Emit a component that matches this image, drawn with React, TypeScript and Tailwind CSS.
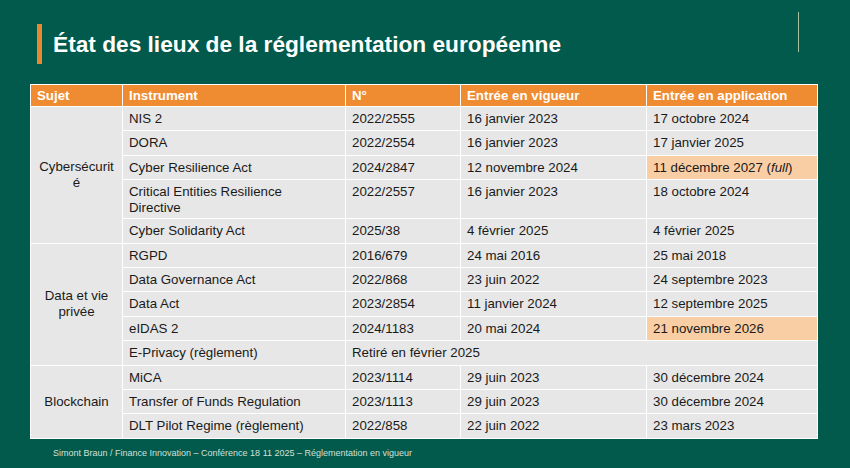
import React from 'react';

type Row = {
  instrument: string;
  number: string;
  inForce?: string;
  applies?: React.ReactNode;
  highlight?: boolean;
  tall?: boolean;
  spanNote?: string;
};

type Group = { subject: string; rows: Row[] };

const groups: Group[] = [
  {
    subject: 'Cybersécurité',
    rows: [
      { instrument: 'NIS 2', number: '2022/2555', inForce: '16 janvier 2023', applies: '17 octobre 2024' },
      { instrument: 'DORA', number: '2022/2554', inForce: '16 janvier 2023', applies: '17 janvier 2025' },
      {
        instrument: 'Cyber Resilience Act',
        number: '2024/2847',
        inForce: '12 novembre 2024',
        applies: (
          <>
            11 décembre 2027 (<i>full</i>)
          </>
        ),
        highlight: true,
      },
      {
        instrument: 'Critical Entities Resilience Directive',
        number: '2022/2557',
        inForce: '16 janvier 2023',
        applies: '18 octobre 2024',
        tall: true,
      },
      { instrument: 'Cyber Solidarity Act', number: '2025/38', inForce: '4 février 2025', applies: '4 février 2025' },
    ],
  },
  {
    subject: 'Data et vie privée',
    rows: [
      { instrument: 'RGPD', number: '2016/679', inForce: '24 mai 2016', applies: '25 mai 2018' },
      { instrument: 'Data Governance Act', number: '2022/868', inForce: '23 juin 2022', applies: '24 septembre 2023' },
      { instrument: 'Data Act', number: '2023/2854', inForce: '11 janvier 2024', applies: '12 septembre 2025' },
      { instrument: 'eIDAS 2', number: '2024/1183', inForce: '20 mai 2024', applies: '21 novembre 2026', highlight: true },
      { instrument: 'E-Privacy (règlement)', number: '', spanNote: 'Retiré en février 2025' },
    ],
  },
  {
    subject: 'Blockchain',
    rows: [
      { instrument: 'MiCA', number: '2023/1114', inForce: '29 juin 2023', applies: '30 décembre 2024' },
      { instrument: 'Transfer of Funds Regulation', number: '2023/1113', inForce: '29 juin 2023', applies: '30 décembre 2024' },
      { instrument: 'DLT Pilot Regime (règlement)', number: '2022/858', inForce: '22 juin 2022', applies: '23 mars 2023' },
    ],
  },
];

const headCell = 'border-[1.5px] border-white px-[6px] align-middle text-left font-bold text-white';

export default function App() {
  return (
    <div className="w-[850px] h-[468px] bg-[#015a4b] flex flex-col font-['Liberation_Sans',Arial,sans-serif] overflow-hidden">
      {/* title bar */}
      <div className="flex justify-between items-start pt-[12px]">
        <div className="flex items-center mt-[12px] ml-[37px] h-[40px]">
          <div className="w-[5px] h-[40px] bg-[#e8892f]" />
          <h1 className="ml-[11px] text-[22.7px] font-bold text-white leading-none">
            État des lieux de la réglementation européenne
          </h1>
        </div>
        <div className="w-px h-[40px] mr-[51px] bg-[#a9c39e]" />
      </div>

      {/* table */}
      <table className="mt-[20px] ml-[30px] w-[787px] table-fixed border-collapse text-[13.3px] leading-[16px] text-[#1a1a1a]">
        <colgroup>
          <col className="w-[92px]" />
          <col className="w-[223px]" />
          <col className="w-[115px]" />
          <col className="w-[186px]" />
          <col className="w-[171px]" />
        </colgroup>
        <thead>
          <tr className="h-[22px] bg-[#ef8b30]">
            <th className={headCell}>Sujet</th>
            <th className={headCell}>Instrument</th>
            <th className={headCell}>N°</th>
            <th className={headCell}>Entrée en vigueur</th>
            <th className={headCell}>Entrée en application</th>
          </tr>
        </thead>
        <tbody className="bg-[#e7e7e7]">
          {groups.map((g) =>
            g.rows.map((r, i) => {
              const cell =
                'border-[1.5px] border-white px-[6px] pt-[4px] align-top text-left ' +
                (r.tall ? 'pb-[1px]' : 'pb-[3px]');
              return (
                <tr key={g.subject + r.instrument} className={r.tall ? 'h-[39px]' : 'h-[24.4px]'}>
                  {i === 0 && (
                    <td
                      rowSpan={g.rows.length}
                      className="border-[1.5px] border-white px-[7px] align-middle text-center [overflow-wrap:anywhere]"
                    >
                      {g.subject}
                    </td>
                  )}
                  <td className={cell + ' pr-[16px]'}>{r.instrument}</td>
                  {r.spanNote ? (
                    <td colSpan={3} className={cell}>
                      {r.spanNote}
                    </td>
                  ) : (
                    <>
                      <td className={cell}>{r.number}</td>
                      <td className={cell}>{r.inForce}</td>
                      <td className={cell + (r.highlight ? ' bg-[#f9cea4]' : '')}>{r.applies}</td>
                    </>
                  )}
                </tr>
              );
            })
          )}
        </tbody>
      </table>

      <p className="mt-[9px] ml-[53px] text-[9px] leading-[11px] text-[#d3e0da]">
        Simont Braun / Finance Innovation – Conférence 18 11 2025 – Réglementation en vigueur
      </p>
    </div>
  );
}
